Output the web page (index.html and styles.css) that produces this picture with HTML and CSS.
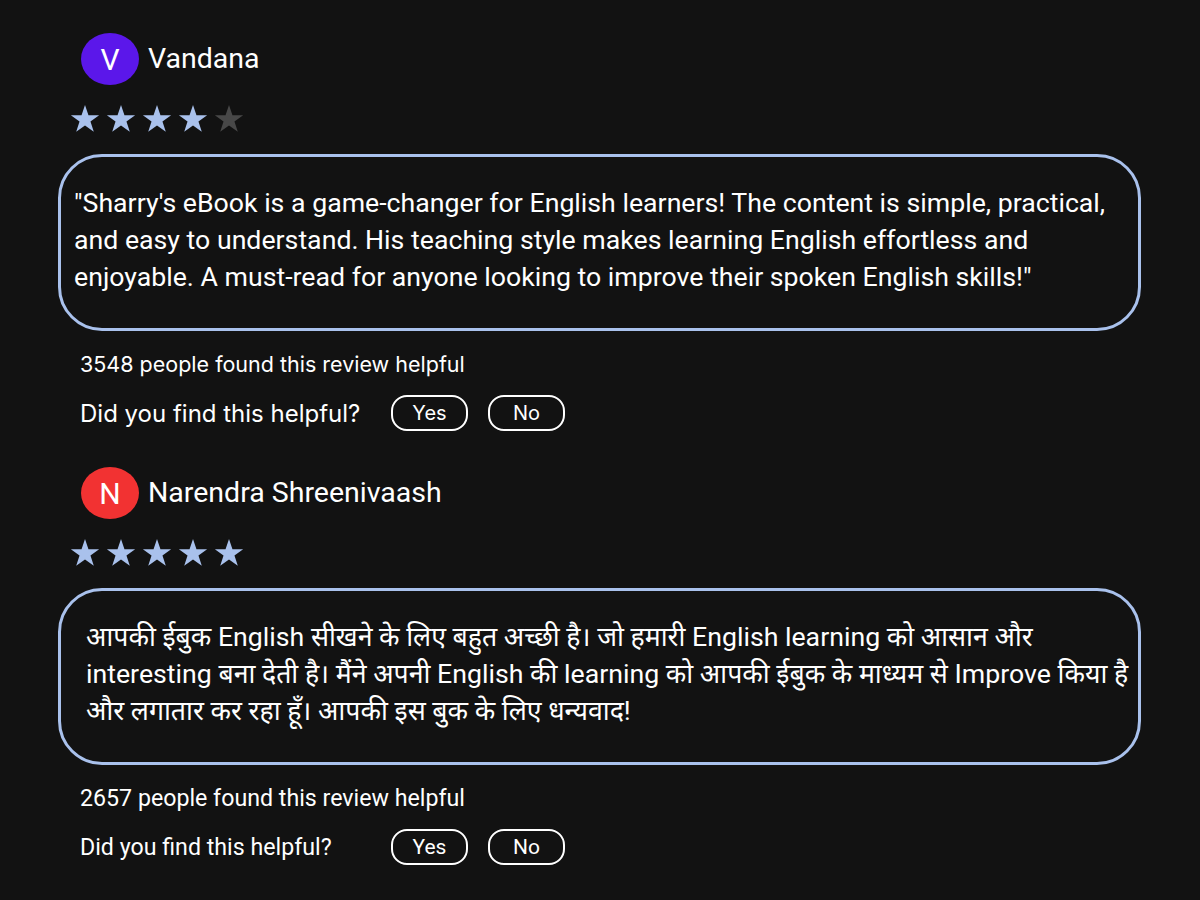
FILE: index.html
```html
<!DOCTYPE html>
<html lang="en">
<head>
<meta charset="utf-8">
<title>Reviews</title>
<link rel="stylesheet" href="styles.css">
</head>
<body>
<main class="reviews">
  <section class="review">
    <div class="reviewer">
      <div class="avatar avatar-purple">V</div>
      <div class="name">Vandana</div>
    </div>
    <div class="stars">
      <svg class="star on" viewBox="0 0 24 24"><polygon points="12,1.5 14.6,9.1 22.6,9.1 16.1,13.9 18.6,21.6 12,16.9 5.4,21.6 7.9,13.9 1.4,9.1 9.4,9.1"/></svg>
      <svg class="star on" viewBox="0 0 24 24"><polygon points="12,1.5 14.6,9.1 22.6,9.1 16.1,13.9 18.6,21.6 12,16.9 5.4,21.6 7.9,13.9 1.4,9.1 9.4,9.1"/></svg>
      <svg class="star on" viewBox="0 0 24 24"><polygon points="12,1.5 14.6,9.1 22.6,9.1 16.1,13.9 18.6,21.6 12,16.9 5.4,21.6 7.9,13.9 1.4,9.1 9.4,9.1"/></svg>
      <svg class="star on" viewBox="0 0 24 24"><polygon points="12,1.5 14.6,9.1 22.6,9.1 16.1,13.9 18.6,21.6 12,16.9 5.4,21.6 7.9,13.9 1.4,9.1 9.4,9.1"/></svg>
      <svg class="star off" viewBox="0 0 24 24"><polygon points="12,1.5 14.6,9.1 22.6,9.1 16.1,13.9 18.6,21.6 12,16.9 5.4,21.6 7.9,13.9 1.4,9.1 9.4,9.1"/></svg>
    </div>
    <div class="box box-en">
      <p>"Sharry's eBook is a game-changer for English learners! The content is simple, practical, and easy to understand. His teaching style makes learning English effortless and enjoyable. A must-read for anyone looking to improve their spoken English skills!"</p>
    </div>
    <div class="count alt-font">3548 people found this review helpful</div>
    <div class="ask alt-font">
      <span class="ask-label">Did you find this helpful?</span>
      <button class="vote">Yes</button>
      <button class="vote">No</button>
    </div>
  </section>

  <section class="review">
    <div class="reviewer">
      <div class="avatar avatar-red">N</div>
      <div class="name">Narendra Shreenivaash</div>
    </div>
    <div class="stars">
      <svg class="star on" viewBox="0 0 24 24"><polygon points="12,1.5 14.6,9.1 22.6,9.1 16.1,13.9 18.6,21.6 12,16.9 5.4,21.6 7.9,13.9 1.4,9.1 9.4,9.1"/></svg>
      <svg class="star on" viewBox="0 0 24 24"><polygon points="12,1.5 14.6,9.1 22.6,9.1 16.1,13.9 18.6,21.6 12,16.9 5.4,21.6 7.9,13.9 1.4,9.1 9.4,9.1"/></svg>
      <svg class="star on" viewBox="0 0 24 24"><polygon points="12,1.5 14.6,9.1 22.6,9.1 16.1,13.9 18.6,21.6 12,16.9 5.4,21.6 7.9,13.9 1.4,9.1 9.4,9.1"/></svg>
      <svg class="star on" viewBox="0 0 24 24"><polygon points="12,1.5 14.6,9.1 22.6,9.1 16.1,13.9 18.6,21.6 12,16.9 5.4,21.6 7.9,13.9 1.4,9.1 9.4,9.1"/></svg>
      <svg class="star on" viewBox="0 0 24 24"><polygon points="12,1.5 14.6,9.1 22.6,9.1 16.1,13.9 18.6,21.6 12,16.9 5.4,21.6 7.9,13.9 1.4,9.1 9.4,9.1"/></svg>
    </div>
    <div class="box box-hi">
      <p lang="hi">आपकी ईबुक English सीखने के लिए बहुत अच्छी है। जो हमारी English learning को आसान और interesting बना देती है। मैंने अपनी English की learning को आपकी ईबुक के माध्यम से Improve किया है और लगातार कर रहा हूँ। आपकी इस बुक के लिए धन्यवाद!</p>
    </div>
    <div class="count">2657 people found this review helpful</div>
    <div class="ask">
      <span class="ask-label">Did you find this helpful?</span>
      <button class="vote">Yes</button>
      <button class="vote">No</button>
    </div>
  </section>
</main>
</body>
</html>
```

FILE: styles.css
```css
html, body {
  margin: 0;
  padding: 0;
  background: #121212;
}

body {
  color: #ffffff;
  font-family: Roboto, "Noto Sans", "Noto Sans CJK SC", sans-serif;
}

.reviews {
  display: flex;
  flex-direction: column;
  padding: 33px 0 0 58px;
  width: 1083px;
}

.review {
  display: flex;
  flex-direction: column;
  height: 434px;
}

.reviewer {
  display: flex;
  align-items: center;
  gap: 9px;
  margin-left: 23px;
  height: 52px;
}

.avatar {
  width: 58px;
  height: 52px;
  border-radius: 50%;
  display: flex;
  align-items: center;
  justify-content: center;
  font-size: 30px;
  color: #ffffff;
}

.avatar-purple { background: #5b17ea; }
.avatar-red { background: #f23232; }

.name {
  font-size: 28.5px;
  line-height: 32px;
}

.stars {
  display: flex;
  gap: 4px;
  margin: 18px 0 0 11px;
  height: 32px;
}

.star {
  width: 32px;
  height: 32px;
}

.star.on { fill: #a9c1ec; }
.star.off { fill: #484848; }

.box {
  margin-top: 19px;
  border: 3px solid #a9c1ec;
  border-radius: 44px;
  box-sizing: border-box;
  height: 177px;
  display: flex;
}

.box p {
  margin: 0;
  font-size: 26.7px;
  line-height: 37px;
}

.box-en { padding: 28px 16px 0 13px; }
.box-hi { padding: 28px 2px 0 25px; }

.count {
  font-size: 23.2px;
  line-height: 28px;
  margin: 19px 0 0 22px;
}

.ask {
  display: flex;
  align-items: center;
  margin: 17px 0 0 22px;
  font-size: 23.2px;
}

.ask-label {
  width: 311px;
}

.vote {
  width: 77px;
  height: 36px;
  box-sizing: border-box;
  border: 2px solid #ffffff;
  border-radius: 16px;
  background: transparent;
  color: #ffffff;
  font-family: inherit;
  font-size: 21px;
  padding: 0;
  margin-right: 20px;
}

.alt-font {
  font-family: Inter, Roboto, sans-serif;
}

.count.alt-font { font-size: 21.5px; }
.ask.alt-font { font-size: 24px; }
.ask.alt-font .vote { font-size: 20px; }
```
